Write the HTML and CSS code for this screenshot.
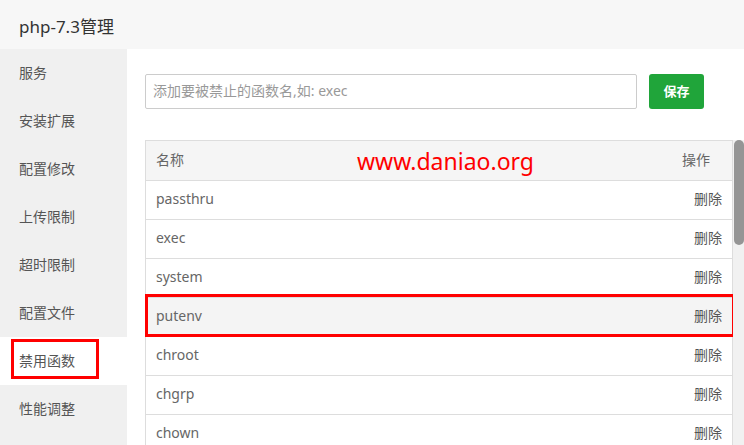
FILE: index.html
```html
<!DOCTYPE html>
<html lang="zh">
<head>
<meta charset="utf-8">
<title>php-7.3管理</title>
<link rel="stylesheet" href="styles.css">
</head>
<body>
<div class="page">
  <header class="top">php-7.3管理</header>
  <div class="body">
    <nav class="side">
      <div class="item">服务</div>
      <div class="item">安装扩展</div>
      <div class="item">配置修改</div>
      <div class="item">上传限制</div>
      <div class="item">超时限制</div>
      <div class="item">配置文件</div>
      <div class="item active marked">禁用函数</div>
      <div class="item">性能调整</div>
    </nav>
    <main class="main">
      <div class="form">
        <input class="input" type="text" placeholder="添加要被禁止的函数名,如: exec">
        <button class="btn">保存</button>
      </div>
      <div class="list">
        <div class="scroller">
          <div class="table">
            <div class="row head"><span>名称</span><span class="op">操作</span></div>
            <div class="row"><span>passthru</span><span class="del">删除</span></div>
            <div class="row"><span>exec</span><span class="del">删除</span></div>
            <div class="row"><span>system</span><span class="del">删除</span></div>
            <div class="row hover marked"><span>putenv</span><span class="del">删除</span></div>
            <div class="row"><span>chroot</span><span class="del">删除</span></div>
            <div class="row"><span>chgrp</span><span class="del">删除</span></div>
            <div class="row"><span>chown</span><span class="del">删除</span></div>
          </div>
        </div>
        <div class="scrollbar"><div class="thumb"></div></div>
      </div>
      <div class="watermark">www.daniao.org</div>
    </main>
  </div>
</div>
</body>
</html>
```

FILE: styles.css
```css
*, *::before, *::after { box-sizing: border-box; }
html, body { margin: 0; padding: 0; }
body {
  font-family: "Noto Sans", "Noto Sans CJK SC", sans-serif;
  color: #666;
  background: #fff;
  overflow: hidden;
}
.page {
  width: 744px;
  height: 445px;
  display: flex;
  flex-direction: column;
  overflow: hidden;
}
.top {
  height: 49px;
  flex: none;
  background: #f7f7f7;
  color: #333;
  font-size: 17px;
  line-height: 49px;
  padding: 2px 0 0 19px;
  overflow: hidden;
}
.body {
  flex: 1;
  display: flex;
  min-height: 0;
}
.side {
  width: 127px;
  flex: none;
  background: #f0f0f0;
}
.item {
  position: relative;
  height: 48px;
  line-height: 48px;
  padding-left: 19px;
  font-size: 14px;
  color: #555;
}
.item.active { background: #fff; }
.item.marked::after {
  content: "";
  position: absolute;
  left: 11px;
  top: 2px;
  width: 88px;
  height: 40px;
  border: 3px solid #f00;
}
.main {
  position: relative;
  flex: 1;
  min-width: 0;
  display: flex;
  flex-direction: column;
  padding: 25px 0 0 18px;
}
.form {
  display: flex;
  gap: 12px;
  flex: none;
}
.input {
  width: 492px;
  height: 35px;
  border: 1px solid #ccc;
  border-radius: 2px;
  padding: 0 7px 2px;
  font-family: inherit;
  font-size: 14px;
  color: #555;
  outline: none;
}
.input::placeholder { color: #999; }
.btn {
  width: 55px;
  height: 35px;
  border: 0;
  border-radius: 3px;
  background: #20a53a;
  color: #fff;
  font-family: inherit;
  font-size: 13px;
  font-weight: bold;
  padding: 0 0 2px;
}
.list {
  margin-top: 31px;
  flex: 1;
  min-height: 0;
  display: flex;
}
.scroller {
  flex: 1;
  min-width: 0;
  overflow: hidden;
}
.scrollbar {
  width: 11px;
  flex: none;
  background: #f1f1f1;
  padding-left: 1px;
}
.thumb {
  height: 105px;
  width: 10px;
  background: #959595;
  border-radius: 5px;
}
.table {
  border: 1px solid #ddd;
  border-bottom: 0;
}
.row {
  position: relative;
  display: flex;
  justify-content: space-between;
  align-items: center;
  height: 39px;
  padding: 0 10px 3px 10px;
  border-bottom: 1px solid #ddd;
  font-size: 14px;
  color: #666;
}
.row.head {
  height: 40px;
  background: #f5f5f5;
  color: #666;
  padding-right: 22px;
}
.row.hover { background: #f4f4f4; }
.row.marked::after {
  content: "";
  position: absolute;
  left: -1px;
  right: -3px;
  top: -4px;
  bottom: -1px;
  border: 3px solid #f00;
}
.del { font-size: 14px; color: #555; padding-bottom: 2px; }
.op { font-size: 14px; color: #666; }
.watermark {
  position: absolute;
  left: 230px;
  top: 101px;
  font-size: 23px;
  color: #f00;
  line-height: 1;
}
```
